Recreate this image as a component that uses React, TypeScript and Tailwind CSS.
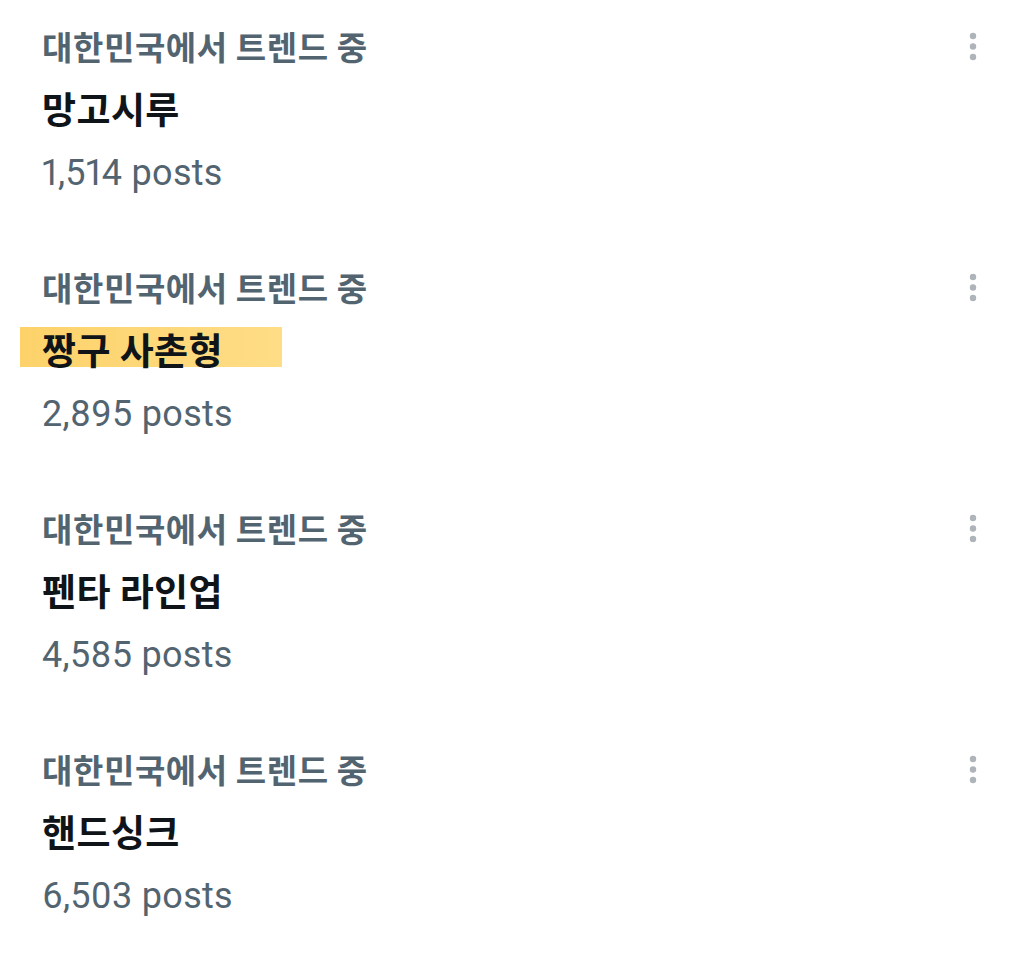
import React from 'react'

const trends = [
  { topic: '망고시루', posts: '1,514 posts', highlight: false },
  { topic: '짱구 사촌형', posts: '2,895 posts', highlight: true },
  { topic: '펜타 라인업', posts: '4,585 posts', highlight: false },
  { topic: '핸드싱크', posts: '6,503 posts', highlight: false },
]

function MoreDots() {
  return (
    <svg width="12" height="36" viewBox="0 0 12 36" className="text-[#aeb4b9]">
      <circle cx="6" cy="7" r="3.2" fill="currentColor" />
      <circle cx="6" cy="17.5" r="3.2" fill="currentColor" />
      <circle cx="6" cy="28" r="3.2" fill="currentColor" />
    </svg>
  )
}

export default function App() {
  return (
    <div
      className="w-[1024px] h-[963px] bg-white overflow-hidden"
      style={{ fontFamily: '"Noto Sans CJK KR", Roboto, sans-serif' }}
    >
      {trends.map(t => (
        <div key={t.topic} className="h-[241px] pt-4 pl-[42px] pr-[45px] flex">
          <div className="flex-1 flex flex-col">
            <div className="h-[62px] flex items-center text-[33px] font-bold text-[#536471] tracking-[0.6px]">
              대한민국에서 트렌드 중
            </div>
            <div className="h-[62px] flex items-center relative">
              {t.highlight && (
                <div className="absolute left-[-22px] w-[262px] top-[8px] h-[40px] bg-gradient-to-r from-[#fdd26a] to-[#fedd86]" />
              )}
              <span className="relative text-[37px] font-bold text-[#0f1419] tracking-[0.4px]">{t.topic}</span>
            </div>
            <div
              className="h-[66px] flex items-center text-[36px] text-[#536471] proportional-nums tracking-[0.3px]"
              style={{ fontFamily: 'Roboto, "Noto Sans CJK KR", sans-serif' }}
            >
              {t.posts}
            </div>
          </div>
          <div className="pt-[13px]">
            <MoreDots />
          </div>
        </div>
      ))}
    </div>
  )
}
